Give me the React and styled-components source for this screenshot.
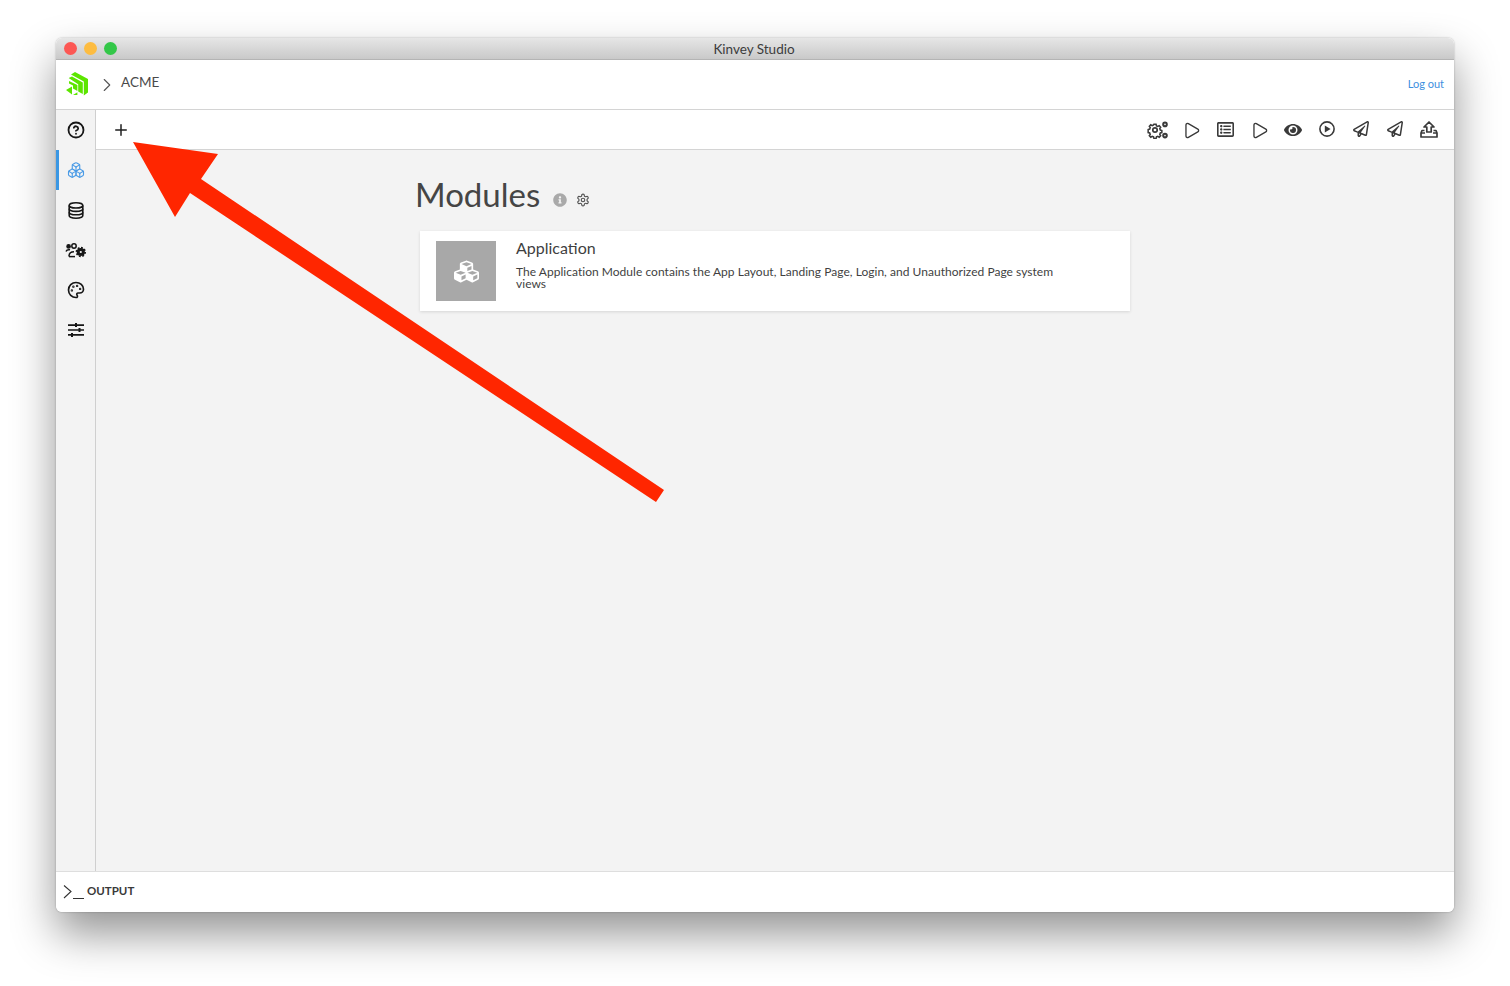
import React from "react";
import styled, { createGlobalStyle } from "styled-components";
import { CircleHelp, Boxes, Palette, Plus, Play, ChevronRight } from "lucide-react";
import { FaCubes, FaEye, FaRegPaperPlane, FaInfoCircle, FaRegListAlt } from "react-icons/fa";
import { LuSettings } from "react-icons/lu";

const GlobalStyle = createGlobalStyle`
  html, body {
    margin: 0;
    background: #fff;
    font-family: Lato, "Open Sans", sans-serif;
    overflow: hidden;
  }
`;

const Desktop = styled.div`
  height: 986px;
  padding: 38px 56px 0;
  box-sizing: border-box;
`;

const Window = styled.div`
  position: relative;
  width: 1398px;
  height: 874px;
  display: flex;
  flex-direction: column;
  border-radius: 6px;
  overflow: hidden;
  background: #fff;
`;

const WindowShadow = styled.div`
  width: 1398px;
  height: 874px;
  border-radius: 6px;
  box-shadow: 0 22px 44px rgba(0, 0, 0, 0.42), 0 0 2px rgba(0, 0, 0, 0.3);
`;

const TitleBar = styled.div`
  height: 22px;
  flex: none;
  position: relative;
  display: flex;
  align-items: center;
  justify-content: center;
  background: linear-gradient(#e6e6e6, #c9c9c9);
  border-bottom: 1px solid #b4b4b4;
  box-sizing: border-box;
  font-size: 13.5px;
  color: #3c3c3c;
  padding-right: 2px;
`;

const Lights = styled.div`
  position: absolute;
  left: 8px;
  top: 4px;
  display: flex;
  gap: 7px;
`;

const Light = styled.span`
  width: 13px;
  height: 13px;
  border-radius: 50%;
  background: ${(props) => props.color};
`;

const Header = styled.div`
  height: 50px;
  flex: none;
  display: flex;
  align-items: center;
  padding: 0 9px;
  box-sizing: border-box;
  border-bottom: 1px solid #d4d4d4;
  color: #4a4a4a;
`;

const LogoWrap = styled.span`
  display: flex;
  margin-top: -3px;
`;

const Breadcrumb = styled.span`
  font-size: 13.5px;
  margin-left: 3px;
  margin-top: -5px;
`;

const Crumb = styled.span`
  display: flex;
  margin-left: 7px;
  color: #555;
`;

const LogOut = styled.a`
  margin-left: auto;
  margin-top: -2px;
  margin-right: 1px;
  font-size: 11px;
  color: #3d8fe0;
`;

const Body = styled.div`
  flex: 1;
  display: flex;
  min-height: 0;
`;

const Sidebar = styled.div`
  width: 40px;
  flex: none;
  background: #f3f3f3;
  border-right: 1px solid #cfcfcf;
  box-sizing: border-box;
`;

const SideItem = styled.div`
  height: 40px;
  display: flex;
  align-items: center;
  justify-content: center;
  box-sizing: border-box;
  color: ${(props) => (props.active ? "#4a9be6" : "#161616")};
  border-left: 3px solid ${(props) => (props.active ? "#3b97e3" : "transparent")};
  padding-right: 3px;
`;

const Main = styled.div`
  flex: 1;
  display: flex;
  flex-direction: column;
  background: #f3f3f3;
`;

const Toolbar = styled.div`
  height: 40px;
  flex: none;
  display: flex;
  align-items: center;
  background: #fff;
  border-bottom: 1px solid #d4d4d4;
  box-sizing: border-box;
  padding: 0 8px 0 16px;
  color: #1f1f1f;
`;

const ToolIcons = styled.div`
  margin-left: auto;
  margin-top: 1px;
  display: flex;
  color: #3a3a3a;
`;

const ToolIcon = styled.div`
  width: 34px;
  display: flex;
  justify-content: center;
`;

const Content = styled.div`
  width: 710px;
  margin: 0 auto;
`;

const TitleRow = styled.div`
  display: flex;
  align-items: center;
  height: 81px;
  box-sizing: border-box;
  padding-top: 7px;
  margin-left: -5px;
`;

const Title = styled.h1`
  margin: 0;
  font-size: 33px;
  font-weight: 400;
  color: #454545;
`;

const TitleIcons = styled.div`
  display: flex;
  align-items: center;
  gap: 9px;
  margin: 12px 0 0 13px;
  color: #a9a9a9;
`;

const GearWrap = styled.span`
  display: flex;
  color: #555;
`;

const Card = styled.div`
  display: flex;
  height: 80px;
  box-sizing: border-box;
  padding: 10px 16px;
  background: #fff;
  box-shadow: 0 1px 3px rgba(0, 0, 0, 0.12);
`;

const Thumb = styled.div`
  width: 60px;
  height: 60px;
  flex: none;
  display: flex;
  align-items: center;
  justify-content: center;
  background: #a8a8a8;
  color: #fff;
`;

const CardText = styled.div`
  margin-left: 20px;
  width: 545px;
`;

const CardTitle = styled.div`
  font-size: 16px;
  line-height: 18px;
  color: #3f3f3f;
  margin-top: -2px;
  margin-bottom: 9px;
`;

const CardDesc = styled.div`
  font-size: 12px;
  line-height: 12px;
  letter-spacing: 0.03px;
  color: #3f3f3f;
`;

const OutputBar = styled.div`
  height: 41px;
  flex: none;
  display: flex;
  align-items: center;
  padding-left: 6px;
  box-sizing: border-box;
  border-top: 1px solid #dedede;
  color: #333;
`;

const Prompt = styled.svg`
  flex: none;
`;

const OutputLabel = styled.span`
  font-size: 11.5px;
  font-weight: 700;
  margin-left: 3px;
  margin-top: -3px;
  color: #3a3a3a;
`;

const Arrow = styled.svg`
  position: absolute;
  left: 0;
  top: 0;
  pointer-events: none;
`;

const Logo = () => (
  <svg width="24" height="25" viewBox="0 0 24 25" fill="#5ce500">
    <path d="M6 3.6 L10 1 L23 8 V21.5 L18.8 24.4 V10.6 Z" />
    <path d="M3.6 7 L7 5.4 L17.8 11.4 V23 L13.2 20.4 V13.2 Z" />
    <path d="M4 10 L12.4 14 V20 L8 17.6 V14.6 L4 12.4 Z" />
    <path d="M1 19 L7 15.6 V23.6 Z" />
    <path d="M8 24 L12.4 21.2 L12.4 24 Z" />
  </svg>
);

const Gears = () => (
  <svg width="21" height="18" viewBox="0 0 21 18" fill="none" stroke="currentColor" strokeWidth="1.7">
    <circle cx="8" cy="9" r="2.2" />
    <path d="M6.8 2.6h2.4l.4 1.8 1.5.7 1.6-.9 1.6 1.7-1 1.5.6 1.6 1.7.5v2.4l-1.7.4-.6 1.6 1 1.5-1.6 1.6-1.6-.9-1.5.6-.4 1.8H6.8l-.4-1.8-1.5-.6-1.6.9-1.6-1.6 1-1.5-.6-1.6-1.7-.4V8.5l1.7-.5.6-1.6-1-1.5 1.6-1.7 1.6.9 1.5-.7z" transform="translate(.8 .9) scale(.9)" />
    <circle cx="18" cy="3.4" r="1.8" strokeWidth="2" />
    <circle cx="18" cy="14.6" r="1.8" strokeWidth="2" />
  </svg>
);

const Stack = () => (
  <svg width="16" height="17" viewBox="0 0 16 17" fill="none" stroke="currentColor" strokeWidth="1.6">
    <ellipse cx="8" cy="3.4" rx="6.8" ry="2.6" />
    <path d="M1.2 3.4v10.2c0 1.5 3 2.6 6.8 2.6s6.8-1.1 6.8-2.6V3.4" />
    <path d="M1.2 6.8c0 1.5 3 2.6 6.8 2.6s6.8-1.1 6.8-2.6M1.2 10.2c0 1.5 3 2.6 6.8 2.6s6.8-1.1 6.8-2.6" />
  </svg>
);

const TeamGear = () => (
  <svg width="21" height="15" viewBox="0 0 21 15" fill="none" stroke="currentColor" strokeWidth="1.5">
    <circle cx="3.6" cy="3.4" r="1.6" fill="currentColor" />
    <circle cx="9" cy="3" r="2.2" />
    <path d="M1 8.6c.6-1.6 2.2-2.2 4-1.8M4 13.4c0-3 2-4.6 5-4.6" />
    <path d="M4 13.6h6" />
    <circle cx="15.8" cy="9" r="2.6" strokeWidth="3" />
    <circle cx="15.8" cy="9" r="4.4" strokeWidth="1.6" strokeDasharray="1.8 1.6" />
  </svg>
);

const Sliders = () => (
  <svg width="16" height="14" viewBox="0 0 16 14" fill="currentColor">
    <path d="M0 1.3h16v1.6H0zM0 6.2h16v1.6H0zM0 11.1h16v1.6H0z" />
    <path d="M7 0h2v4H7zM10.5 5h2v4h-2zM3 10h2v4H3z" />
  </svg>
);

const PlayCircle = () => (
  <svg width="16" height="16" viewBox="0 0 16 16" fill="none" stroke="currentColor" strokeWidth="1.6">
    <circle cx="8" cy="8" r="7.1" />
    <path d="M5.8 4.4 L11.6 8 L5.8 11.6 Z" fill="currentColor" stroke="none" />
  </svg>
);

const Upload = () => (
  <svg width="18" height="17" viewBox="0 0 18 17" fill="none" stroke="currentColor" strokeWidth="1.7" strokeLinejoin="round">
    <path d="M9 1 L14 6 H11.2 V11 H6.8 V6 H4 Z" />
    <path d="M4.5 9.5 H2 L1 12 V16 H17 V12 L16 9.5 H13.5" />
    <path d="M1 12 H5 M13 12 H17" />
  </svg>
);

const PLANE = <FaRegPaperPlane size={16} />;

function App() {
  return (
    <Desktop>
      <GlobalStyle />
      <WindowShadow>
        <Window>
          <TitleBar>
            <Lights>
              <Light color="#fc5753" />
              <Light color="#fdbc40" />
              <Light color="#33c748" />
            </Lights>
            Kinvey Studio
          </TitleBar>
          <Header>
            <LogoWrap>
              <Logo />
            </LogoWrap>
            <Crumb>
              <ChevronRight size={22} strokeWidth={1.2} />
            </Crumb>
            <Breadcrumb>ACME</Breadcrumb>
            <LogOut>Log out</LogOut>
          </Header>
          <Body>
            <Sidebar>
              <SideItem>
                <CircleHelp size={18} strokeWidth={2.4} />
              </SideItem>
              <SideItem active>
                <Boxes size={18} strokeWidth={1.5} />
              </SideItem>
              <SideItem>
                <Stack />
              </SideItem>
              <SideItem>
                <TeamGear />
              </SideItem>
              <SideItem>
                <Palette size={18} strokeWidth={2.2} />
              </SideItem>
              <SideItem>
                <Sliders />
              </SideItem>
            </Sidebar>
            <Main>
              <Toolbar>
                <Plus size={18} strokeWidth={2} />
                <ToolIcons>
                  <ToolIcon>
                    <Gears />
                  </ToolIcon>
                  <ToolIcon>
                    <Play size={19} strokeWidth={1.7} />
                  </ToolIcon>
                  <ToolIcon>
                    <FaRegListAlt size={17} />
                  </ToolIcon>
                  <ToolIcon>
                    <Play size={19} strokeWidth={1.7} />
                  </ToolIcon>
                  <ToolIcon>
                    <FaEye size={18} />
                  </ToolIcon>
                  <ToolIcon>
                    <PlayCircle />
                  </ToolIcon>
                  <ToolIcon>{PLANE}</ToolIcon>
                  <ToolIcon>{PLANE}</ToolIcon>
                  <ToolIcon>
                    <Upload />
                  </ToolIcon>
                </ToolIcons>
              </Toolbar>
              <Content>
                <TitleRow>
                  <Title>Modules</Title>
                  <TitleIcons>
                    <FaInfoCircle size={14} />
                    <GearWrap>
                      <LuSettings size={14} />
                    </GearWrap>
                  </TitleIcons>
                </TitleRow>
                <Card>
                  <Thumb>
                    <FaCubes size={25} />
                  </Thumb>
                  <CardText>
                    <CardTitle>Application</CardTitle>
                    <CardDesc>
                      The Application Module contains the App Layout, Landing Page, Login, and Unauthorized Page system views
                    </CardDesc>
                  </CardText>
                </Card>
              </Content>
            </Main>
          </Body>
          <OutputBar>
            <Prompt width="22" height="16" viewBox="0 0 22 16" fill="none" stroke="currentColor" strokeWidth="1.1">
              <path d="M2 1.5 L9 7.5 L2 14" />
              <path d="M11 14.5 H22" />
            </Prompt>
            <OutputLabel>OUTPUT</OutputLabel>
          </OutputBar>
          <Arrow width="1398" height="874" viewBox="56 38 1398 874">
            <polygon points="133,142 218,154 201,179 664,490 656,502 190,193 175,217" fill="#ff2600" />
          </Arrow>
        </Window>
      </WindowShadow>
    </Desktop>
  );
}

export default App;
